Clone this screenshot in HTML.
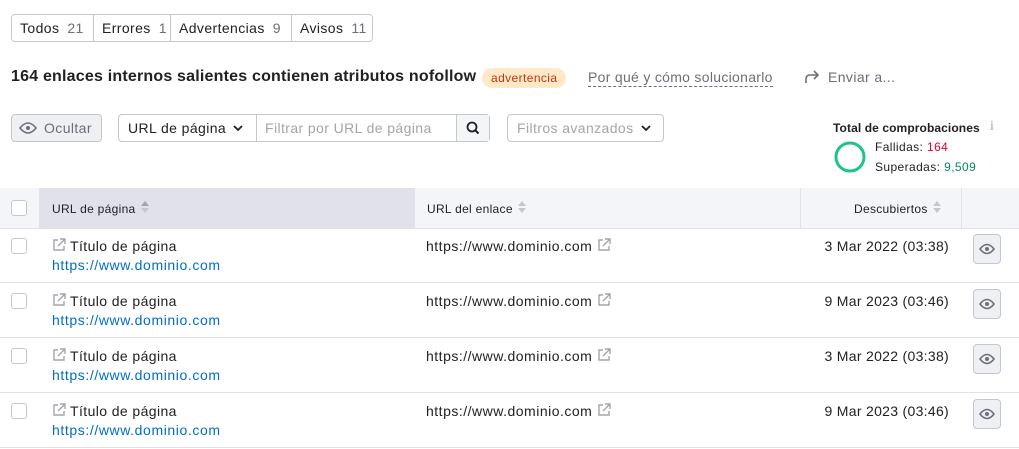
<!DOCTYPE html><html><head><meta charset="utf-8"><style>
*{box-sizing:border-box;margin:0;padding:0}
body{width:1019px;height:449px;background:#fff;font-family:"Liberation Sans",sans-serif;color:#212124;font-size:14px;position:relative;overflow:hidden;letter-spacing:0.4px}
.a{position:absolute}
.tabs{left:11px;top:14px;height:28px;display:flex;border:1px solid #c4c7cf;border-radius:4px}
.tabs div{padding-left:8px;line-height:26px;font-size:14px;border-right:1px solid #c4c7cf}
.tabs div:last-child{border:none}
.tabs span{color:#6c6e79;margin-left:8px}
.btn{border:1px solid #c4c7cf;border-radius:4px;height:28px}
.gray{color:#6c6e79}
.row{left:0;width:1019px;height:55px;border-bottom:1px solid #e0e1e9}
.cb{width:16px;height:16px;border:1px solid #c4c7cf;border-radius:3px;background:#fff}
.lnk{color:#006dca;letter-spacing:0.6px}
.srt{vertical-align:-1px;margin-left:4px}
</style></head><body>
<div class="a tabs"><div style="width:82px">Todos<span>21</span></div><div style="width:77px">Errores<span>1</span></div><div style="width:121px">Advertencias<span>9</span></div><div style="width:80px">Avisos<span>11</span></div></div>
<div class="a" style="left:11px;top:68px;font-size:16px;font-weight:bold;letter-spacing:0.2px">164 enlaces internos salientes contienen atributos nofollow</div>
<div class="a" style="left:482px;top:68px;height:20px;padding:0 9px;background:#ffe9c8;border-radius:10px;color:#c4350c;font-size:12px;line-height:20px">advertencia</div>
<div class="a gray" style="left:588px;top:69px;font-size:14px;border-bottom:1px dashed #6c6e79;line-height:17px;letter-spacing:0.3px">Por qué y cómo solucionarlo</div>
<svg class="a" style="left:804px;top:70px" width="16" height="14" viewBox="0 0 16 14"><path d="M2 13V9q0-4 4-4h8M10 1l4 4-4 4" fill="none" stroke="#6c6e79" stroke-width="1.6"/></svg>
<div class="a gray" style="left:828px;top:69px;font-size:14px">Enviar a...</div>
<div class="a btn" style="left:11px;top:114px;width:91px;background:#eff0f3;color:#6c6e79;line-height:26px;padding-left:32px">Ocultar</div>
<svg class="a" style="left:19px;top:121px" width="18" height="14" viewBox="0 0 18 14"><path d="M1 7q8-10 16 0q-8 10-16 0z" fill="none" stroke="#6c6e79" stroke-width="1.6"/><circle cx="9" cy="7" r="2" fill="#6c6e79"/></svg>
<div class="a btn" style="left:118px;top:114px;width:372px;display:flex">
<div style="width:138px;border-right:1px solid #c4c7cf;line-height:26px;padding-left:9px">URL de página</div>
<div style="width:200px;border-right:1px solid #c4c7cf;line-height:26px;padding-left:8px;color:#a3a5ae">Filtrar por URL de página</div>
<div style="flex:1;background:#f4f5f9"><svg width="32" height="26" viewBox="0 0 32 26"><circle cx="15" cy="12" r="4.5" fill="none" stroke="#212124" stroke-width="1.8"/><path d="M18 15l3.5 3.5" stroke="#212124" stroke-width="2"/></svg></div></div>
<div class="a btn" style="left:507px;top:114px;width:157px;line-height:26px;padding-left:9px;color:#a3a5ae">Filtros avanzados</div>
<svg class="a" style="left:640px;top:124px" width="12" height="8" viewBox="0 0 12 8"><path d="M2 2l4 4 4-4" fill="none" stroke="#212124" stroke-width="1.8"/></svg>
<svg class="a" style="left:232px;top:124px" width="12" height="8" viewBox="0 0 12 8"><path d="M2 2l4 4 4-4" fill="none" stroke="#212124" stroke-width="1.8"/></svg>
<div class="a" style="left:833px;top:121px;font-size:12px;font-weight:bold;letter-spacing:0.1px">Total de comprobaciones</div>
<div class="a" style="left:990px;top:119px;font-size:14px;color:#a3a5ae;font-family:'Liberation Serif',serif">i</div>
<svg class="a" style="left:834px;top:141px" width="32" height="32"><circle cx="16" cy="16" r="14" fill="none" stroke="#1cc38b" stroke-width="3"/></svg>
<div class="a" style="left:875px;top:140px;font-size:12px">Fallidas: <span style="color:#e3002c">164</span></div>
<div class="a" style="left:875px;top:160px;font-size:12px">Superadas: <span style="color:#008a63">9,509</span></div>
<div class="a" style="left:0;top:188px;width:1019px;height:41px;background:#f4f5f9;border-bottom:1px solid #e0e1e9"></div>
<div class="a" style="left:39px;top:188px;width:376px;height:40px;background:#e0e1e9"></div>
<div class="a" style="left:800px;top:188px;width:1px;height:40px;background:#e0e1e9"></div>
<div class="a" style="left:961px;top:188px;width:1px;height:40px;background:#e0e1e9"></div>
<div class="a cb" style="left:11px;top:200px"></div>
<div class="a" style="left:52px;top:200px;font-size:12px;letter-spacing:0.3px">URL de página<svg class="srt" width="10" height="14" viewBox="0 0 10 14"><path d="M1 6l4-5 4 5z" fill="#a3a5ae"/><path d="M1 8l4 5 4-5z" fill="#c4c7cf"/></svg></div>
<div class="a" style="left:427px;top:200px;font-size:12px;letter-spacing:0.3px">URL del enlace<svg class="srt" width="10" height="14" viewBox="0 0 10 14"><path d="M1 6l4-5 4 5z" fill="#c4c7cf"/><path d="M1 8l4 5 4-5z" fill="#c4c7cf"/></svg></div>
<div class="a" style="left:854px;top:200px;font-size:12px;letter-spacing:0.3px">Descubiertos<svg class="srt" width="10" height="14" viewBox="0 0 10 14"><path d="M1 6l4-5 4 5z" fill="#c4c7cf"/><path d="M1 8l4 5 4-5z" fill="#c4c7cf"/></svg></div>
<div id="rows"></div>
<script>
var d=["3 Mar 2022 (03:38)","9 Mar 2023 (03:46)","3 Mar 2022 (03:38)","9 Mar 2023 (03:46)"],h="";
var ext='<svg width="14" height="14" viewBox="0 0 14 14" style="vertical-align:-1px"><path d="M6 2H2v10h10V8M8 1h5v5M13 1L6 8" fill="none" stroke="#a3a5ae" stroke-width="1.4"/></svg>';
for(var i=0;i<4;i++){var t=228+i*55;
h+='<div class="a row" style="top:'+t+'px"></div><div class="a cb" style="left:11px;top:'+(t+10)+'px"></div>'+
'<div class="a" style="left:52px;top:'+(t+10)+'px">'+ext+' Título de página</div>'+
'<div class="a lnk" style="left:52px;top:'+(t+29)+'px">https://www.dominio.com</div>'+
'<div class="a" style="left:426px;top:'+(t+10)+'px;letter-spacing:0.5px">https://www.dominio.com '+ext+'</div>'+
'<div class="a" style="right:70px;top:'+(t+10)+'px;letter-spacing:0.3px">'+d[i]+'</div>'+
'<div class="a btn" style="left:973px;top:'+(t+6)+'px;width:28px;height:30px;background:#eff0f3"><svg width="26" height="28" viewBox="0 0 26 28"><path d="M6 14q7-9 14 0q-7 9-14 0z" fill="none" stroke="#6c6e79" stroke-width="1.6"/><circle cx="13" cy="14" r="2" fill="#6c6e79"/></svg></div>';}
document.getElementById("rows").innerHTML=h;
</script>
</body></html>
